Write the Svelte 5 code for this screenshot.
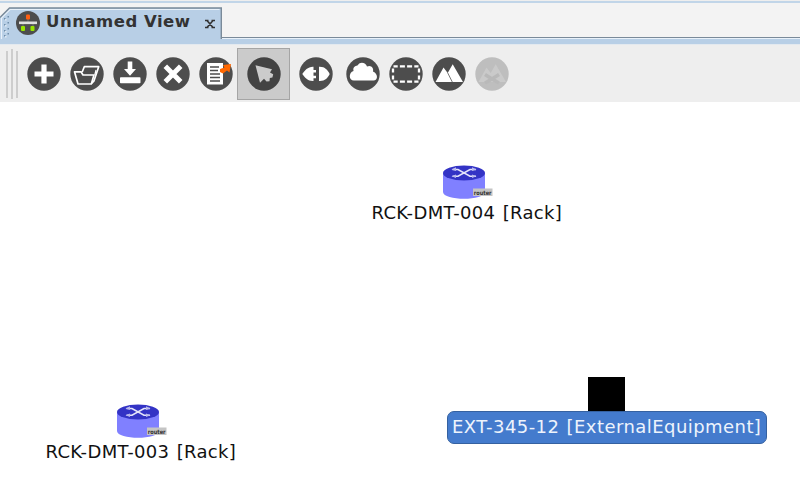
<script>
  const tools = ['add', 'open', 'save', 'delete', 'export', 'select', 'connect', 'cloud', 'frame', 'background', 'clear'];
  const nodes = [
    { name: 'RCK-DMT-004 [Rack]', x: 367, y: 162 },
    { name: 'RCK-DMT-003 [Rack]', x: 41, y: 401 }
  ];
</script>

<div class="window">
  <header class="tabs">
    <div class="tab">
      <svg class="tab-shape" width="222" height="32" viewBox="0 0 222 32">
        <path d="M0 32V10L9 1H221V32Z" fill="#b8cfe6" />
        <path d="M1.5 32V11L10 2.5H219.5" fill="none" stroke="#e8f1fa" stroke-width="1.2" />
        <path d="M0 10.5L9.5 1H221.3V32" fill="none" stroke="#7a8a99" stroke-width="1.4" />
        {#each [10, 16, 22, 27] as y}
          <rect x="4" y={y + 1} width="1.5" height="1.5" fill="#6f8da9" /><rect x="7.5" y={y - 1} width="1.5" height="1.5" fill="#6f8da9" />
          <rect x="5.2" y={y + 2.2} width="1.2" height="1.2" fill="#fff" />
        {/each}
      </svg>
      <svg class="logo" width="26" height="26" viewBox="0 0 26 26">
        <circle cx="13" cy="13" r="12" fill="#4d4d4d" />
        <path d="M13 6v7M8 13v4M18 13v4" stroke="#707070" />
        <rect x="11" y="4.5" width="4" height="5" rx="1" fill="#ff5f12" />
        <rect x="4" y="11.5" width="18" height="2.6" fill="#dedede" />
        <rect x="6" y="16" width="4" height="5" rx="1" fill="#97e500" />
        <rect x="15.5" y="16" width="4" height="5" rx="1" fill="#97e500" />
      </svg>
      <span class="title">Unnamed View</span>
      <svg class="close" width="10" height="10" viewBox="0 0 10 10"><path d="M0 1.5H3.5M6.5 1.5H10M0 8.5H3.5M6.5 8.5H10M2 1.5L8 8.5M8 1.5L2 8.5" fill="none" stroke="#333" stroke-width="1.6" /></svg>
    </div>
  </header>
  <div class="accent"></div>
  <nav class="toolbar">
    <div class="grip"><i></i><i></i><i></i></div>
    {#each tools as tool}
      <button class:selected={tool === 'select'} class={tool} aria-label={tool}>
        <svg width="34" height="34" viewBox="0 0 34 34">
          <circle cx="17" cy="17" r="16.7" fill={tool === 'clear' ? '#bebebe' : tool === 'select' ? '#434343' : '#4d4d4d'} />
          {#if tool === 'add'}
            <path d="M17 7.5V26.5M7.5 17H26.5" stroke="#fff" stroke-width="5.2" />
          {:else if tool === 'open'}
            <g fill="none" stroke="#fff" stroke-width="1.7" stroke-linejoin="round">
              <path d="M4.5 14.8H11L13 18H24L21.3 27H8Z" />
              <path d="M12.2 15L14.3 9.7H28.7L24 23.8L21.5 26.5" />
              <path d="M24.8 18L26 13" stroke-width="1.2" />
            </g>
          {:else if tool === 'save'}
            <path d="M14.7 4.5H19.3V12H23L17 18.8L11 12H14.7Z" fill="#fff" />
            <rect x="7" y="20.2" width="20.5" height="6" rx=".8" fill="#fff" />
          {:else if tool === 'delete'}
            <path d="M9.3 9.3L24.7 24.7M24.7 9.3L9.3 24.7" stroke="#fff" stroke-width="5" />
          {:else if tool === 'export'}
            <path d="M8 6H24V27.5H8Z" fill="#fff" />
            <path d="M11 10H20M11 13.5H19M11 17H21M11 20.5H21M11 24H21" stroke="#4d4d4d" stroke-width="1.3" />
            <path d="M24 8L32 7L30.5 15.5L28 13.5L24 16.5L21 15V12L25.5 10.5Z" fill="#ff6700" />
          {:else if tool === 'select'}
            <path d="M8.5 8.3L25 12.2L23 15.5L26.2 17.2L25.4 20.5L22.8 21L22.5 24.2L19.5 24.6L17 21.8L13 25.8Z" fill="#cbcbcb" />
          {:else if tool === 'connect'}
            <path d="M14.5 9.8V13H17V15.5H14.5V18.8H17V21.2H14.5V24C9 24.3 5.8 20.5 3.3 17C5.8 13.5 9 9.5 14.5 9.8Z" fill="#fff" />
            <path d="M20 9.8C26 9.5 28.5 13 30.7 17C28.5 21 26 24.3 20 24Z" fill="#fff" />
          {:else if tool === 'cloud'}
            <path d="M8 23.5C2.5 23.5 2.5 15.5 7.5 14C6.5 9 10.5 9.2 12 8C14 4 20 5.5 21 9.5C25 7.5 28 11 27 14.5C32.5 17 32 23.5 27.5 23.5Z" fill="#fff" />
          {:else if tool === 'frame'}
            <g fill="none" stroke="#fff" stroke-width="2.3">
              <path d="M4.5 9.3H29.5M4.5 24.7H29.5" stroke-dasharray="5 2.2" stroke-dashoffset=".8" />
              <path d="M4 11.5V15.5M4 18.5V22.5M30 11.5V15.5M30 18.5V22.5" />
            </g>
          {:else if tool === 'background'}
            <path d="M3.5 25L11.5 10.5L15.7 16L20.7 7.3L31 25Z" fill="#fff" />
            <path d="M15.5 15.5L20.3 25" stroke="#777" stroke-width="1" />
          {:else}
            <path d="M3.5 25L11.5 10.5L15.7 16L20.7 7.3L31 25Z" fill="#cacaca" />
            <path d="M10 17.5L17 22L24 17.5M10 26L17 22L24 26" fill="none" stroke="#b9b9b9" stroke-width="3.5" />
          {/if}
        </svg>
      </button>
    {/each}
  </nav>
  <main>
    {#each nodes as node}
      <div class="node" style="left:{node.x}px;top:{node.y - 102}px">
        <svg width="54" height="38" viewBox="0 0 54 38">
          <path d="M3 11V30C3 39 45 39 45 30V11Z" fill="#8080ff" />
          <ellipse cx="24" cy="11" rx="21" ry="7.6" fill="#3333c5" />
          <path d="M12.5 7.5H18L30 14.2H36M12.5 14.2H18L30 7.5H36" fill="none" stroke="#e4e4fa" stroke-width="1.6" />
          <path d="M32 5.2L36.5 7.5L32 9ZM32 12.5L36.5 14.2L32 16ZM16 5.2L11.5 7.5L16 9ZM16 12.5L11.5 14.2L16 16Z" fill="#b9b9ed" />
          <rect x="33" y="26.5" width="19.5" height="7.5" fill="#c4c4c4" />
          <text x="33.8" y="32.5" textLength="17.8" lengthAdjust="spacingAndGlyphs" class="tag">router</text>
        </svg>
        <span>{node.name}</span>
      </div>
    {/each}
    <div class="external">
      <div class="box"></div>
      <span>EXT-345-12 [ExternalEquipment]</span>
    </div>
  </main>
</div>

<style>
  .window { width: 800px; height: 492px; overflow: hidden; display: flex; flex-direction: column; background: #fff; font-family: "DejaVu Sans", sans-serif; }
  .tabs { flex: none; height: 38px; box-sizing: border-box; padding-top: 7px; background: linear-gradient(#eee 0 1px, #c1d5e8 1px 3px, #f3f3f3 3px 37px, #7a8a99 37px 38px); }
  .tab { position: relative; width: 222px; height: 32px; display: flex; align-items: center; }
  .tab-shape { position: absolute; left: 0; top: 0; }
  .logo { position: relative; margin-left: 15px; margin-top: 0; }
  .title { position: relative; margin-left: 5px; width: 145px; font-weight: bold; font-size: 16.5px; line-height: 28px; letter-spacing: .5px; color: #333; white-space: nowrap; margin-top: -2px; }
  .close { position: relative; margin-left: 14px; margin-top: 1px; }
  .accent { flex: none; height: 7px; background: linear-gradient(#e8f1fa 0 1px, #b8cfe6 1px 6px, #e3e9ef 6px); }
  .toolbar { flex: none; height: 57px; box-sizing: border-box; display: flex; align-items: center; padding: 1px 0 0 6px; background: #eee; }
  .grip { display: flex; align-items: center; gap: 3px; width: 21px; }
  .grip i { width: 2px; height: 47px; background: #cdcdcd; }
  .grip i:nth-child(2) { height: 50px; }
  button { box-sizing: border-box; flex: none; width: 34px; height: 34px; margin: 0 9px 0 0; padding: 0; border: 0; background: none; }
  svg { display: block; }
  button.export { margin-right: 4px; }
  button.selected { width: 53px; height: 52px; padding: 0 0 0 8.5px; border: 1.5px solid #a5a5a5; background: #cbcbcb; }
  button.connect { margin-right: 13px; }
  main { position: relative; flex: 1; }
  .node { position: absolute; width: 200px; display: flex; flex-direction: column; }
  .node svg { margin-left: 73px; }
  .node span { font-size: 18px; letter-spacing: .34px; word-spacing: 1.2px; line-height: 24px; margin-left: 4.5px; margin-top: 1px; color: #111; white-space: nowrap; }
  .tag { font: bold 6px "DejaVu Sans", sans-serif; fill: #333; }
  .external { position: absolute; left: 447px; top: 275px; width: 320px; display: flex; flex-direction: column; }
  .box { width: 37px; height: 35px; margin-left: 141px; background: #000; }
  .external span { box-sizing: border-box; height: 33px; margin-top: -1px; padding-left: 4px; border: 1.5px solid #3561a0; border-radius: 7px; background: #447bcd; color: #edf3fc; font-size: 18px; letter-spacing: .44px; word-spacing: 1px; line-height: 30px; white-space: nowrap; }
</style>
